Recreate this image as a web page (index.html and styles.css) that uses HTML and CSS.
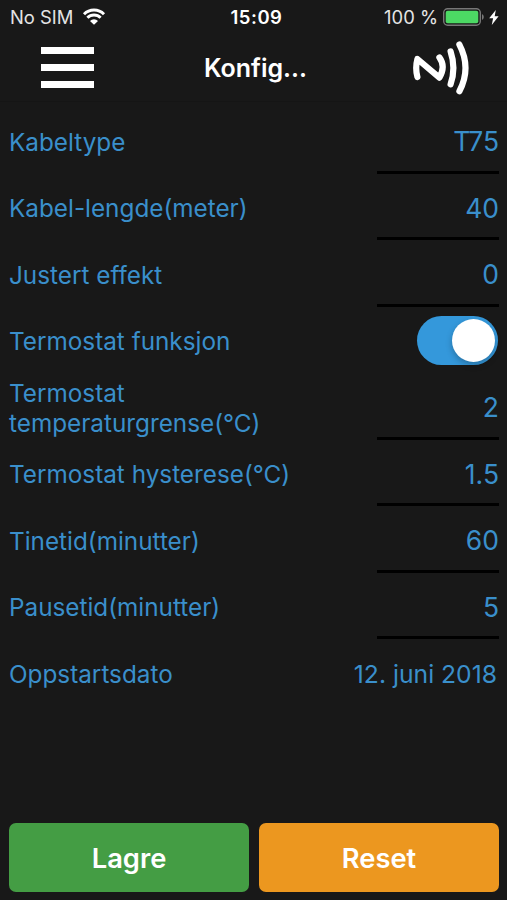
FILE: index.html
```html
<!DOCTYPE html>
<html lang="nb">

<head>
	<meta charset="utf-8">
	<meta name="viewport" content="width=device-width, initial-scale=1">
	<title>Konfigurasjon</title>
	<link rel="stylesheet" href="styles.css">
</head>

<body>
	<div class="app">

		<div class="status-bar">
			<div class="status-left">
				<span class="carrier">No SIM</span>
				<svg class="wifi" width="24" height="18" viewBox="0 0 24 18">
					<path d="M2 6.2a14.2 14.2 0 0 1 20 0M5.4 9.7a9.4 9.4 0 0 1 13.2 0" fill="none" stroke="#fff" stroke-width="3" />
					<path d="M12 16.8L8 12.9a5.7 5.7 0 0 1 8 0z" fill="#fff" />
				</svg>
			</div>
			<span class="clock">15:09</span>
			<div class="status-right">
				<span class="percent">100 %</span>
				<svg class="battery" width="42" height="18" viewBox="0 0 42 18">
					<rect x="0.7" y="0.7" width="36.6" height="16.6" rx="4" fill="none" stroke="#777" stroke-width="1.4" />
					<rect x="2.7" y="2.7" width="32.6" height="12.6" rx="2" fill="#4cd964" />
					<path d="M39 6a3.4 3.4 0 0 1 0 6z" fill="#777" />
				</svg>
				<svg class="bolt" width="10" height="15" viewBox="0 0 10 15">
					<path d="M6.8 0L0.2 8.2h3.9L2.8 15 9.6 6.2H5.7z" fill="#fff" />
				</svg>
			</div>
		</div>

		<div class="nav-bar">
			<div class="menu-button">
				<span></span>
				<span></span>
				<span></span>
			</div>
			<h1 class="nav-title">Konfig...</h1>
			<svg class="nfc" width="58" height="54" viewBox="0 0 58 54" fill="none" stroke="#fff" stroke-width="6.2" stroke-linecap="round" stroke-linejoin="round">
				<path d="M5.4 36Q3 27 5.4 18L27.4 36.6Q34 25.5 27.4 16.4" />
				<path d="M38.6 10.4Q44.2 27 38.6 43.2" />
				<path d="M47.4 3.6Q59.6 27 47.4 50.2" />
			</svg>
		</div>

		<div class="settings">
			<div class="row">
				<span class="label">Kabeltype</span>
				<span class="value">T75</span>
			</div>
			<div class="row">
				<span class="label">Kabel-lengde(meter)</span>
				<span class="value">40</span>
			</div>
			<div class="row">
				<span class="label">Justert effekt</span>
				<span class="value">0</span>
			</div>
			<div class="row">
				<span class="label">Termostat funksjon</span>
				<span class="switch"><span class="knob"></span></span>
			</div>
			<div class="row">
				<span class="label">Termostat temperaturgrense(°C)</span>
				<span class="value">2</span>
			</div>
			<div class="row">
				<span class="label">Termostat hysterese(°C)</span>
				<span class="value">1.5</span>
			</div>
			<div class="row">
				<span class="label">Tinetid(minutter)</span>
				<span class="value">60</span>
			</div>
			<div class="row">
				<span class="label">Pausetid(minutter)</span>
				<span class="value">5</span>
			</div>
			<div class="row">
				<span class="label">Oppstartsdato</span>
				<span class="date">12. juni 2018</span>
			</div>
		</div>

		<div class="buttons">
			<button class="button button-save">Lagre</button>
			<button class="button button-reset">Reset</button>
		</div>

	</div>
</body>

</html>
```

FILE: styles.css
```css
* {
	box-sizing: border-box;
}

body {
	margin: 0;
	background: #181818;
	color: #fff;
	font-family: Inter, "Liberation Sans", sans-serif;
}

.app {
	display: flex;
	flex-direction: column;
	width: 507px;
	height: 900px;
	overflow: hidden;
}

/* status bar */
.status-bar {
	display: grid;
	grid-template-columns: 1fr auto 1fr;
	align-items: center;
	height: 34px;
	padding: 0 8px 0 10px;
	font-size: 18.4px;
	line-height: 32px;
}

.status-left,
.status-right {
	display: flex;
	align-items: center;
}

.status-right {
	justify-content: flex-end;
}

.carrier {
	color: #e4e4e4;
}

.wifi {
	margin-left: 9px;
}

.clock {
	padding-left: 4px;
	font-size: 18.5px;
	font-weight: 600;
	letter-spacing: .5px;
}

.percent {
	color: #e4e4e4;
}

.battery {
	margin-left: 5px;
}

.bolt {
	margin-left: 4px;
}

/* navigation */
.nav-bar {
	display: flex;
	align-items: center;
	justify-content: space-between;
	height: 68px;
	padding: 0 37px 0 41px;
	border-bottom: 1px solid #151515;
}

.menu-button {
	display: flex;
	flex-direction: column;
	gap: 10px;
	width: 53px;
}

.menu-button span {
	height: 7px;
	background: #fff;
}

.nav-title {
	margin: 0;
	padding-left: 5px;
	font-size: 25px;
	font-weight: 600;
}

/* settings list */
.settings {
	flex: 1;
	padding: 6px 8px 0 9px;
}

.row {
	display: flex;
	align-items: center;
	justify-content: space-between;
	height: 66.5px;
	color: #3a8fcb;
}

.label {
	max-width: 300px;
	padding-top: 1px;
	font-size: 24.3px;
	line-height: 30px;
}

.value {
	align-self: stretch;
	width: 122px;
	height: 65.5px;
	border-bottom: 3px solid #000;
	font-size: 26.5px;
	line-height: 67px;
	text-align: right;
}

.date {
	padding: 1px 2px 0 0;
	font-size: 24.7px;
}

.switch {
	display: flex;
	justify-content: flex-end;
	width: 81px;
	height: 49px;
	margin-right: 1px;
	padding: 3px;
	border-radius: 25px;
	background: #3498db;
}

.knob {
	width: 43px;
	height: 43px;
	border-radius: 50%;
	background: #fff;
	box-shadow: 0 3px 6px rgba(0, 0, 0, .25);
}

/* bottom buttons */
.buttons {
	display: flex;
	gap: 10px;
	padding: 0 8px 8px 9px;
}

.button {
	flex: 1;
	height: 69px;
	padding: 1px 0 0;
	border: 0;
	border-radius: 7px;
	color: #fff;
	font-family: inherit;
	font-size: 27.3px;
	font-weight: 600;
}

.button-save {
	background: #449d44;
}

.button-reset {
	background: #ec971f;
}
```
